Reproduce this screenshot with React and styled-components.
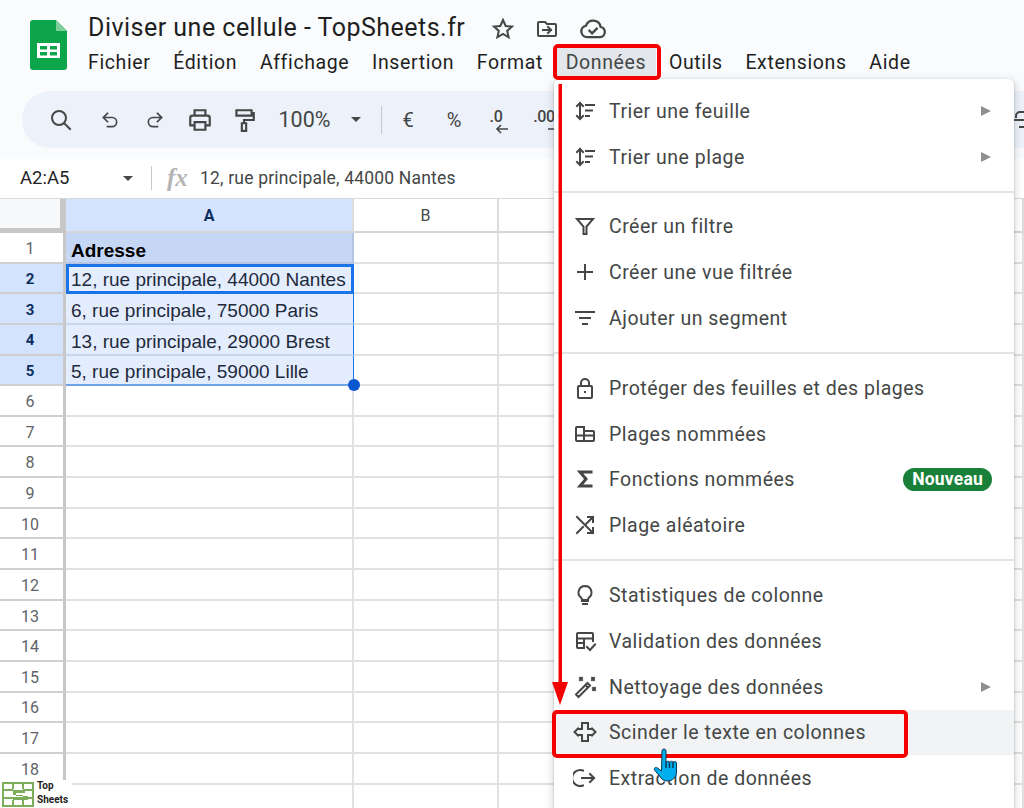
import React from 'react';
import styled, { createGlobalStyle } from 'styled-components';

const GlobalStyle = createGlobalStyle`
  html, body {
    margin: 0;
    padding: 0;
    background: #ffffff;
    font-family: 'Roboto', 'Liberation Sans', sans-serif;
  }
  #root {
    width: 1024px;
    height: 808px;
    overflow: hidden;
  }
`;

const Page = styled.div`
  position: relative;
  width: 1024px;
  height: 808px;
  overflow: hidden;
  background: #ffffff;
`;

const Header = styled.header`
  height: 159px;
  background: #f9fbfd;
  box-sizing: border-box;
  padding-top: 11px;
  overflow: hidden;
`;

const TopBar = styled.div`
  display: flex;
  align-items: flex-start;
  padding-left: 30px;
  height: 80px;
`;

const DocLogo = styled.svg`
  width: 37px;
  height: 50px;
  margin-top: 9px;
  flex: none;
`;

const TitleBlock = styled.div`
  margin-left: 21px;
  display: flex;
  flex-direction: column;
`;

const TitleRow = styled.div`
  display: flex;
  align-items: center;
  height: 34px;
`;

const Title = styled.div`
  font-size: 25px;
  line-height: 34px;
  color: #1f1f1f;
  letter-spacing: 0.48px;
  white-space: nowrap;
  width: 403px;
`;

const TitleIcons = styled.div`
  display: flex;
  align-items: center;
  gap: 20px;
  margin-top: 2px;
`;

const MenuBar = styled.nav`
  display: flex;
  align-items: center;
  gap: 22.7px;
  height: 36px;
`;

const MenuButton = styled.div`
  position: relative;
  font-size: 19.5px;
  line-height: 36px;
  color: #1f1f1f;
  letter-spacing: 0.62px;
  white-space: nowrap;
  ${(p) => p.$active && 'background: #e3e6ea; box-shadow: 10px 0 0 #e3e6ea, -10px 0 0 #e3e6ea; color: #444746;'}
`;

const Callout = styled.span`
  position: absolute;
  border: 4px solid #f50000;
  border-radius: 5px;
  box-sizing: border-box;
  pointer-events: none;
  z-index: 3;
  left: ${(p) => p.$left}px;
  top: ${(p) => p.$top}px;
  width: ${(p) => p.$width}px;
  height: ${(p) => p.$height}px;
`;

const Toolbar = styled.div`
  display: flex;
  align-items: center;
  margin-left: 22px;
  width: 1100px;
  height: 57px;
  background: #edf2fa;
  border-radius: 28px;
  color: #444746;
`;

const ToolSlot = styled.div`
  flex: none;
  display: flex;
  align-items: center;
  justify-content: center;
  width: ${(p) => p.$width}px;
  font-size: ${(p) => p.$size || 20}px;
  color: #444746;
  white-space: nowrap;
`;

const ToolDivider = styled.div`
  flex: none;
  width: 1px;
  height: 28px;
  background: #c7c7c7;
`;

const DecimalGlyph = styled.div`
  display: flex;
  flex-direction: column;
  align-items: flex-end;
  font-size: 16px;
  font-weight: 500;
  line-height: 15px;
  letter-spacing: -0.3px;
  margin-top: 4px;
`;

const DecimalArrow = styled.svg`
  width: 13px;
  height: 10px;
  margin-right: -6px;
  fill: none;
  stroke: #444746;
  stroke-width: 1.6;
`;

const Caret = styled.span`
  width: 0;
  height: 0;
  border-left: 5.5px solid transparent;
  border-right: 5.5px solid transparent;
  border-top: 5.5px solid ${(p) => p.$color || '#444746'};
`;

const FormulaBar = styled.div`
  display: flex;
  align-items: center;
  height: 38px;
  padding-bottom: 1px;
  background: #ffffff;
  border-bottom: 1px solid #d9d9d9;
  box-sizing: content-box;
  color: #444746;
`;

const NameBox = styled.div`
  width: 103px;
  padding-left: 20px;
  font-size: 18.5px;
  color: #1f1f1f;
`;

const FormulaDivider = styled.div`
  width: 1px;
  height: 24px;
  background: #c7c7c7;
  margin: 0 15px 0 18px;
`;

const FxLabel = styled.span`
  font-family: 'Liberation Serif', serif;
  font-style: italic;
  font-weight: 700;
  font-size: 25px;
  color: #b4b4b4;
  width: 33px;
`;

const FormulaValue = styled.div`
  font-size: 17.5px;
  color: #444746;
  letter-spacing: 0.19px;
  white-space: nowrap;
`;

const Grid = styled.div`
  display: grid;
  grid-template-columns: 66px 288px 145px 1fr;
  grid-template-rows: 34px;
  grid-auto-rows: 30.65px;
`;

const Corner = styled.div`
  background: #f8f9fa;
  border-right: 6px solid #c7c7c7;
  border-bottom: 5px solid #c7c7c7;
  box-sizing: border-box;
`;

const ColHead = styled.div`
  display: flex;
  align-items: center;
  justify-content: center;
  box-sizing: border-box;
  font-size: 16px;
  border-right: 2px solid #dcdcdc;
  border-bottom: 2px solid #d6d6d6;
  color: ${(p) => (p.$selected ? '#0b2d5e' : '#444746')};
  font-weight: ${(p) => (p.$selected ? 700 : 400)};
  background: ${(p) => (p.$selected ? '#d3e3fd' : '#ffffff')};
`;

const RowHead = styled.div`
  display: flex;
  align-items: center;
  justify-content: center;
  box-sizing: border-box;
  padding: 2px 3px 0 0;
  font-size: ${(p) => (p.$selected ? 15 : 16)}px;
  border-right: 3px solid #c7c7c7;
  border-bottom: 2px solid #cfcfcf;
  color: ${(p) => (p.$selected ? '#0b2d5e' : '#5f6368')};
  font-weight: ${(p) => (p.$selected ? 700 : 400)};
  background: ${(p) => (p.$selected ? '#d3e3fd' : '#ffffff')};
`;

const Cell = styled.div`
  position: relative;
  display: flex;
  align-items: center;
  box-sizing: border-box;
  padding: ${(p) => (p.$head ? 7 : 5)}px 0 0 5px;
  font-family: 'Liberation Sans', Arial, sans-serif;
  font-size: 19px;
  white-space: nowrap;
  color: #1f2a3c;
  border-right: 2px solid #e1e1e1;
  border-bottom: 2px solid #e1e1e1;
  ${(p) => p.$head && 'background: #c6d7f5; font-weight: 700; color: #000000; border-bottom-color: #b4c6e4; border-right-color: #b4c6e4;'}
  ${(p) => p.$range && 'background: #e3edfd; border-bottom-color: #c9d6ea; border-right: 1.5px solid #1a73e8;'}
  ${(p) => p.$focus && 'outline: 3px solid #1a73e8; outline-offset: -3px;'}
  ${(p) => p.$last && 'border-bottom: 2px solid #6ea3ea;'}
`;

const Handle = styled.span`
  position: absolute;
  right: -7px;
  bottom: -7px;
  width: 12px;
  height: 12px;
  border-radius: 50%;
  background: #0b57d0;
  z-index: 2;
`;

const Menu = styled.div`
  position: absolute;
  left: 554px;
  top: 79px;
  width: 460px;
  height: 760px;
  box-sizing: border-box;
  padding-top: 9px;
  background: #ffffff;
  border-radius: 6px;
  box-shadow: 0 1px 3px rgba(60, 64, 67, 0.3), 0 3px 8px 2px rgba(60, 64, 67, 0.15);
  z-index: 2;
`;

const MenuRow = styled.div`
  position: relative;
  display: flex;
  align-items: center;
  height: 45.8px;
  padding: 0 22px 0 19px;
  gap: 12px;
  font-size: 19.5px;
  letter-spacing: 0.5px;
  color: #444746;
  white-space: nowrap;
  background: ${(p) => (p.$hover ? '#f1f3f4' : 'transparent')};
`;

const RowLabel = styled.span`
  flex: 1;
  padding-top: 1px;
`;

const SubArrow = styled.span`
  width: 0;
  height: 0;
  margin-right: 1px;
  border-top: 5px solid transparent;
  border-bottom: 5px solid transparent;
  border-left: 10px solid #8d9093;
`;

const NewBadge = styled.span`
  background: #188038;
  color: #ffffff;
  font-size: 17.5px;
  font-weight: 700;
  line-height: 23px;
  letter-spacing: 0.2px;
  padding: 0 9px;
  border-radius: 12px;
`;

const Separator = styled.hr`
  margin: 11px 0;
  height: 2px;
  border: none;
  background: #e3e3e3;
`;

const Icon = styled.svg`
  flex: none;
  width: ${(p) => p.$size || 24}px;
  height: ${(p) => p.$size || 24}px;
  fill: none;
  stroke: #444746;
  stroke-width: 2;
  stroke-linecap: square;
  stroke-linejoin: miter;
`;

const ArrowMark = styled.svg`
  position: absolute;
  left: 551px;
  top: 84px;
  width: 18px;
  height: 622px;
  z-index: 3;
`;

const HandMark = styled.svg`
  position: absolute;
  left: 651px;
  top: 748px;
  width: 30px;
  height: 34px;
  z-index: 4;
`;

const Brand = styled.div`
  position: absolute;
  left: 0;
  bottom: 0;
  width: 72px;
  height: 28px;
  display: flex;
  align-items: flex-end;
  gap: 3px;
  padding: 0 0 1px 2px;
  box-sizing: border-box;
  background: #ffffff;
  z-index: 1;
`;

const BrandText = styled.div`
  font-family: 'Roboto', sans-serif;
  font-size: 10px;
  font-weight: 700;
  line-height: 14px;
  color: #222222;
`;

const EdgeGlyph = styled.svg`
  position: absolute;
  left: 1014px;
  top: 110px;
  width: 10px;
  height: 18px;
`;

const sortPath = 'M7 4v16M4 7l3-3 3 3M4 17l3 3 3-3M13 6h8M13 11.5h6M13 17h3';

const paths = {
  sort: sortPath,
  filter: 'M4 5h16l-6.5 7.5V20h-3v-7.5z',
  plus: 'M12 5v14M5 12h14',
  lines: 'M3 6h18M7 12h10M10 18h4',
  lock: 'M6 10h12a1 1 0 0 1 1 1v10a1 1 0 0 1-1 1H6a1 1 0 0 1-1-1V11a1 1 0 0 1 1-1zM8 10V7a4 4 0 0 1 8 0v3M12 16h.01',
  named: 'M4 5h7v4h9a1 1 0 0 1 1 1v8a1 1 0 0 1-1 1H4a1 1 0 0 1-1-1V6a1 1 0 0 1 1-1zM3 13.5h18M11 9v10',
  sigma: 'M18 5H7l6 7-6 7h11',
  shuffle: 'M4 4l16 16M20 15v5h-5M15 4h5v5M20 4l-6.5 6.5M10 14l-6 6',
  bulb: 'M9 18h6M10 21h4M12 3a6.5 6.5 0 0 0-4 11.6c.7.6 1 1.2 1 2.4h6c0-1.2.3-1.8 1-2.4A6.5 6.5 0 0 0 12 3z',
  validate: 'M11 19H5a1 1 0 0 1-1-1V5a1 1 0 0 1 1-1h14a1 1 0 0 1 1 1v7M4 9.5h16M4 14h7M11 9.5V19M14 18l3 3 5-5.5',
  wand: 'M3 19.5 14.5 8 17 10.5 5.5 22zM12.5 10l2.5 2.5M7 3l2 2M9 3 7 5M19 3l2 2M21 3l-2 2M20 13l2 2M22 13l-2 2',
  split: 'M6 9h3V3h6v6h3M6 15h3v6h6v-6h3M5 8.500 1.500 12 5 15.500M19 8.500l3.500 3.500-3.500 3.500',
  extract: 'M10 4.500a8 8 0 1 0 0 15M9 12h12M17 8l4 4-4 4',
  undo: 'M9 14 4 9l5-5M4 9h10.500a5.500 5.500 0 0 1 0 11H9',
  redo: 'M15 14l5-5-5-5M20 9H9.500a5.500 5.500 0 0 0 0 11H15',
  print: 'M7 8V3h10v5M7 17H3v-7a2 2 0 0 1 2-2h14a2 2 0 0 1 2 2v7h-4M7 14h10v7H7z',
  roller: 'M5 3h14v5H5zM19 5.500h2V12h-9v3M10 15h4v7h-4z',
  star: 'M12 3l2.700 6 6.300.6-4.800 4.300 1.400 6.400L12 17l-5.600 3.300 1.400-6.400L3 9.600 9.300 9z',
  folder: 'M3 6a1 1 0 0 1 1-1h6l2 2h8a1 1 0 0 1 1 1v10a1 1 0 0 1-1 1H4a1 1 0 0 1-1-1zM8 13h8M13 10l3 3-3 3',
  cloud: 'M7 19a5 5 0 0 1-1-9.900 6.500 6.500 0 0 1 12.500 1A4.500 4.500 0 0 1 18 19zM9 13.500l2.200 2.200 4-4',
  search: 'M10 3a7 7 0 1 0 0 14 7 7 0 0 0 0-14zM15 15l6 6',
};

const Glyph = ({ name, size, weight }) => (
  <Icon viewBox="0 0 24 24" $size={size} style={weight ? { strokeWidth: weight } : undefined}>
    <path d={paths[name]} />
  </Icon>
);

const menuSections = [
  [
    { icon: 'sort', label: 'Trier une feuille', sub: true },
    { icon: 'sort', label: 'Trier une plage', sub: true },
  ],
  [
    { icon: 'filter', label: 'Créer un filtre' },
    { icon: 'plus', label: 'Créer une vue filtrée' },
    { icon: 'lines', label: 'Ajouter un segment' },
  ],
  [
    { icon: 'lock', label: 'Protéger des feuilles et des plages' },
    { icon: 'named', label: 'Plages nommées' },
    { icon: 'sigma', label: 'Fonctions nommées', badge: 'Nouveau' },
    { icon: 'shuffle', label: 'Plage aléatoire' },
  ],
  [
    { icon: 'bulb', label: 'Statistiques de colonne' },
    { icon: 'validate', label: 'Validation des données' },
    { icon: 'wand', label: 'Nettoyage des données', sub: true },
    { icon: 'split', label: 'Scinder le texte en colonnes', hover: true },
    { icon: 'extract', label: 'Extraction de données' },
  ],
];

const menus = ['Fichier', 'Édition', 'Affichage', 'Insertion', 'Format', 'Données', 'Outils', 'Extensions', 'Aide'];

const cells = {
  1: 'Adresse',
  2: '12, rue principale, 44000 Nantes',
  3: '6, rue principale, 75000 Paris',
  4: '13, rue principale, 29000 Brest',
  5: '5, rue principale, 59000 Lille',
};

const rows = Array.from({ length: 19 }, (_, i) => i + 1);

const App = () => {
  return (
    <Page>
      <GlobalStyle />
      <Header>
        <TopBar>
          <DocLogo viewBox="0 0 37 50">
            <path d="M3 0h23l11 11v36a3 3 0 0 1-3 3H3a3 3 0 0 1-3-3V3a3 3 0 0 1 3-3z" fill="#0da54a" />
            <path d="M26 0l11 11H26z" fill="#7fcf9b" />
            <path d="M7 23h23v15H7zM10 26v3.500h7V26zM20 26v3.500h7V26zM10 32v3.500h7V32zM20 32v3.500h7V32z" fill="#ffffff" fillRule="evenodd" />
          </DocLogo>
          <TitleBlock>
            <TitleRow>
              <Title>Diviser une cellule - TopSheets.fr</Title>
              <TitleIcons>
                <Glyph name="star" size={24} />
                <Glyph name="folder" size={24} />
                <Glyph name="cloud" size={28} />
              </TitleIcons>
            </TitleRow>
            <MenuBar>
              {menus.map((m) => (
                <MenuButton key={m} $active={m === 'Données'}>
                  {m}
                  {m === 'Données' && <Callout $left={-13} $top={-1} $width={108} $height={36} />}
                </MenuButton>
              ))}
            </MenuBar>
          </TitleBlock>
        </TopBar>
        <Toolbar>
          <ToolSlot $width={78}><Glyph name="search" size={24} /></ToolSlot>
          <ToolSlot $width={20}><Glyph name="undo" size={20} /></ToolSlot>
          <ToolSlot $width={70}><Glyph name="redo" size={20} /></ToolSlot>
          <ToolSlot $width={20}><Glyph name="print" size={26} /></ToolSlot>
          <ToolSlot $width={68}><Glyph name="roller" size={26} /></ToolSlot>
          <ToolSlot $width={53} $size={21.5}>100%</ToolSlot>
          <ToolSlot $width={50}><Caret /></ToolSlot>
          <ToolDivider />
          <ToolSlot $width={52}>€</ToolSlot>
          <ToolSlot $width={40}>%</ToolSlot>
          <ToolSlot $width={44}>
            <DecimalGlyph>
              .0
              <DecimalArrow viewBox="0 0 13 10"><path d="M13 5H2M6 1 2 5l4 4" /></DecimalArrow>
            </DecimalGlyph>
          </ToolSlot>
          <ToolSlot $width={52}>
            <DecimalGlyph>
              .00
              <DecimalArrow viewBox="0 0 13 10"><path d="M0 5h11M7 1l4 4-4 4" /></DecimalArrow>
            </DecimalGlyph>
          </ToolSlot>
        </Toolbar>
      </Header>

      <FormulaBar>
        <NameBox>A2:A5</NameBox>
        <Caret />
        <FormulaDivider />
        <FxLabel>fx</FxLabel>
        <FormulaValue>12, rue principale, 44000 Nantes</FormulaValue>
      </FormulaBar>

      <Grid>
        <Corner />
        <ColHead $selected>A</ColHead>
        <ColHead>B</ColHead>
        <ColHead />
        {rows.map((r) => (
          <React.Fragment key={r}>
            <RowHead $selected={r >= 2 && r <= 5}>{r}</RowHead>
            <Cell $head={r === 1} $range={r >= 2 && r <= 5} $focus={r === 2} $last={r === 5}>
              {cells[r]}
              {r === 5 && <Handle />}
            </Cell>
            <Cell />
            <Cell />
          </React.Fragment>
        ))}
      </Grid>

      <EdgeGlyph viewBox="0 0 10 18">
        <path d="M10 2H6a4 4 0 0 0-4 4v2M0 10h10M5 17h5" fill="none" stroke="#444746" strokeWidth="2" />
      </EdgeGlyph>

      <Menu>
        {menuSections.map((section, i) => (
          <React.Fragment key={i}>
            {i > 0 && <Separator />}
            {section.map((item) => (
              <MenuRow key={item.label} $hover={item.hover}>
                <Glyph name={item.icon} weight={item.icon === 'sigma' ? 3 : undefined} />
                <RowLabel>{item.label}</RowLabel>
                {item.sub && <SubArrow />}
                {item.badge && <NewBadge>{item.badge}</NewBadge>}
                {item.hover && <Callout $left={-2} $top={0} $width={356} $height={48} />}
              </MenuRow>
            ))}
          </React.Fragment>
        ))}
      </Menu>

      <ArrowMark viewBox="0 0 18 622">
        <path d="M7.500 0h3.500v600h-3.500z" fill="#f50000" />
        <path d="M1 598h16l-8 23z" fill="#f50000" />
      </ArrowMark>

      <HandMark viewBox="0 0 30 34">
        <path d="M11 3a2 2 0 0 1 4 0v11c1-1 3-1 3.500 0 1-1 3-1 3.500 0 1-.5 3-.5 3.500.5V24c0 5-4 9-9 9-4 0-6-2-8-5l-5-6c-1-2 1-3 3-2l4 3z" fill="#00aeef" stroke="#0b3a50" strokeWidth="1" />
        <path d="M15 14v6M18.500 14v6M22 14v6" stroke="#0b3a50" strokeWidth="1.500" fill="none" />
      </HandMark>

      <Brand>
        <svg viewBox="0 0 32 25" width="32" height="25">
          <path d="M1 1h30v23H1zM1 8h10M1 16h10M21 8h10M21 16h10M11 1v6M21 1v6M11 18v6M21 18v6" fill="none" stroke="#7cae5a" strokeWidth="2" />
          <path d="M11 8h12v3H14v3h12v4H11v-3h10v-2H11z" fill="#7cae5a" />
        </svg>
        <BrandText>Top<br />Sheets</BrandText>
      </Brand>
    </Page>
  );
};

export default App;
